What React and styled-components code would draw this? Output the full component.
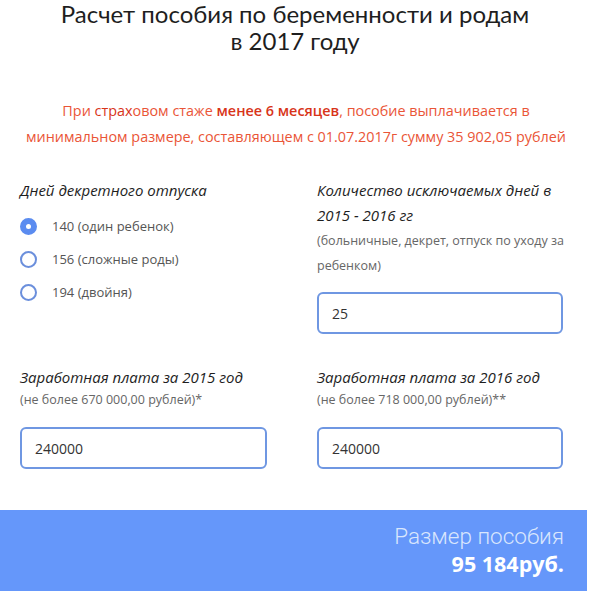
import React from "react";
import styled, { createGlobalStyle } from "styled-components";

const Global = createGlobalStyle`
  html, body { margin: 0; padding: 0; background: #fff; }
  body { font-family: "Open Sans", "Noto Sans", sans-serif; }
  * { box-sizing: border-box; }
`;

const Page = styled.div`
  width: 590px;
  height: 591px;
  overflow: hidden;
  display: flex;
  flex-direction: column;
`;

const Title = styled.h1`
  margin: 0;
  padding: 0;
  text-align: center;
  font-family: "Lato", "Open Sans", sans-serif;
  font-weight: 400;
  font-size: 24px;
  line-height: 27px;
  color: #1e1e1e;
`;

const Notice = styled.div`
  margin-top: 44px;
  display: flex;
  flex-direction: column;
  align-items: center;
  font-size: 14.4px;
  line-height: 26px;
  color: #ea5537;
  padding-left: 2px;
`;

const NoticeLine = styled.div`
  white-space: nowrap;
`;

const Dark = styled.span`
  color: #d83419;
  font-weight: ${(p) => (p.$bold ? 600 : 500)};
`;

const Grid = styled.div`
  margin-top: 28px;
  padding: 0 27px 0 20px;
  display: grid;
  grid-template-columns: 247px 246px;
  column-gap: 50px;
  row-gap: 31px;
`;

const Field = styled.div`
  display: flex;
  flex-direction: column;
`;

const Label = styled.div`
  font-style: italic;
  font-size: 15px;
  line-height: 25px;
  color: #1e1e1e;
  white-space: nowrap;
`;

const Hint = styled.div`
  margin-top: ${(p) => p.$pull || 0}px;
  font-size: 12.5px;
  line-height: 25px;
  color: #666;
  white-space: nowrap;
`;

const Radios = styled.div`
  margin-top: 13px;
  display: flex;
  flex-direction: column;
  gap: 13px;
`;

const RadioRow = styled.label`
  display: flex;
  align-items: center;
  gap: 15px;
  font-size: 13px;
  color: #555;
  height: 20px;
`;

const Dot = styled.span`
  width: 17px;
  height: 17px;
  border-radius: 50%;
  flex: none;
  border: 2px solid ${(p) => (p.$on ? "#5b8cf0" : "#6b8fdc")};
  background: ${(p) => (p.$on ? "#5b8cf0" : "#fff")};
  display: flex;
  align-items: center;
  justify-content: center;
  &::after {
    content: "";
    width: 5px;
    height: 5px;
    border-radius: 50%;
    background: #fff;
    display: ${(p) => (p.$on ? "block" : "none")};
  }
`;

const Input = styled.div`
  margin-top: ${(p) => p.$gap || 0}px;
  height: 42px;
  border: 2px solid #6f97e2;
  border-radius: 6px;
  padding: 0 13px;
  display: flex;
  align-items: center;
  font-size: 14px;
  color: #333;
`;

const Result = styled.div`
  margin-top: auto;
  width: 587px;
  height: 81px;
  background: #6597fa;
  display: flex;
  flex-direction: column;
  align-items: flex-end;
  padding: 12px 23px 0 0;
`;

const ResultLabel = styled.div`
  font-family: "Roboto", "Open Sans", sans-serif;
  font-weight: 300;
  font-size: 22.5px;
  line-height: 28px;
  color: #d9e6fd;
`;

const ResultValue = styled.div`
  font-family: "Open Sans", sans-serif;
  font-weight: 700;
  font-size: 21.5px;
  line-height: 28px;
  color: #fff;
`;

export default function App() {
  return (
    <Page>
      <Global />
      <Title>
        Расчет пособия по беременности и родам
        <br />в 2017 году
      </Title>
      <Notice>
        <NoticeLine>
          При <Dark>страх</Dark>овом стаже <Dark $bold>менее 6 месяцев</Dark>, пособие выплачивается в
        </NoticeLine>
        <NoticeLine>минимальном размере, составляющем с 01.07.2017г сумму 35 902,05 рублей</NoticeLine>
      </Notice>
      <Grid>
        <Field>
          <Label>Дней декретного отпуска</Label>
          <Radios>
            <RadioRow><Dot $on />140 (один ребенок)</RadioRow>
            <RadioRow><Dot />156 (сложные роды)</RadioRow>
            <RadioRow><Dot />194 (двойня)</RadioRow>
          </Radios>
        </Field>
        <Field>
          <Label>Количество исключаемых дней в<br />2015 - 2016 гг</Label>
          <Hint>(больничные, декрет, отпуск по уходу за<br />ребенком)</Hint>
          <Input $gap={14}>25</Input>
        </Field>
        <Field>
          <Label>Заработная плата за 2015 год</Label>
          <Hint $pull={-3}>(не более 670 000,00 рублей)*</Hint>
          <Input $gap={15}>240000</Input>
        </Field>
        <Field>
          <Label>Заработная плата за 2016 год</Label>
          <Hint $pull={-3}>(не более 718 000,00 рублей)**</Hint>
          <Input $gap={15}>240000</Input>
        </Field>
      </Grid>
      <Result>
        <ResultLabel>Размер пособия</ResultLabel>
        <ResultValue>95 184руб.</ResultValue>
      </Result>
    </Page>
  );
}
